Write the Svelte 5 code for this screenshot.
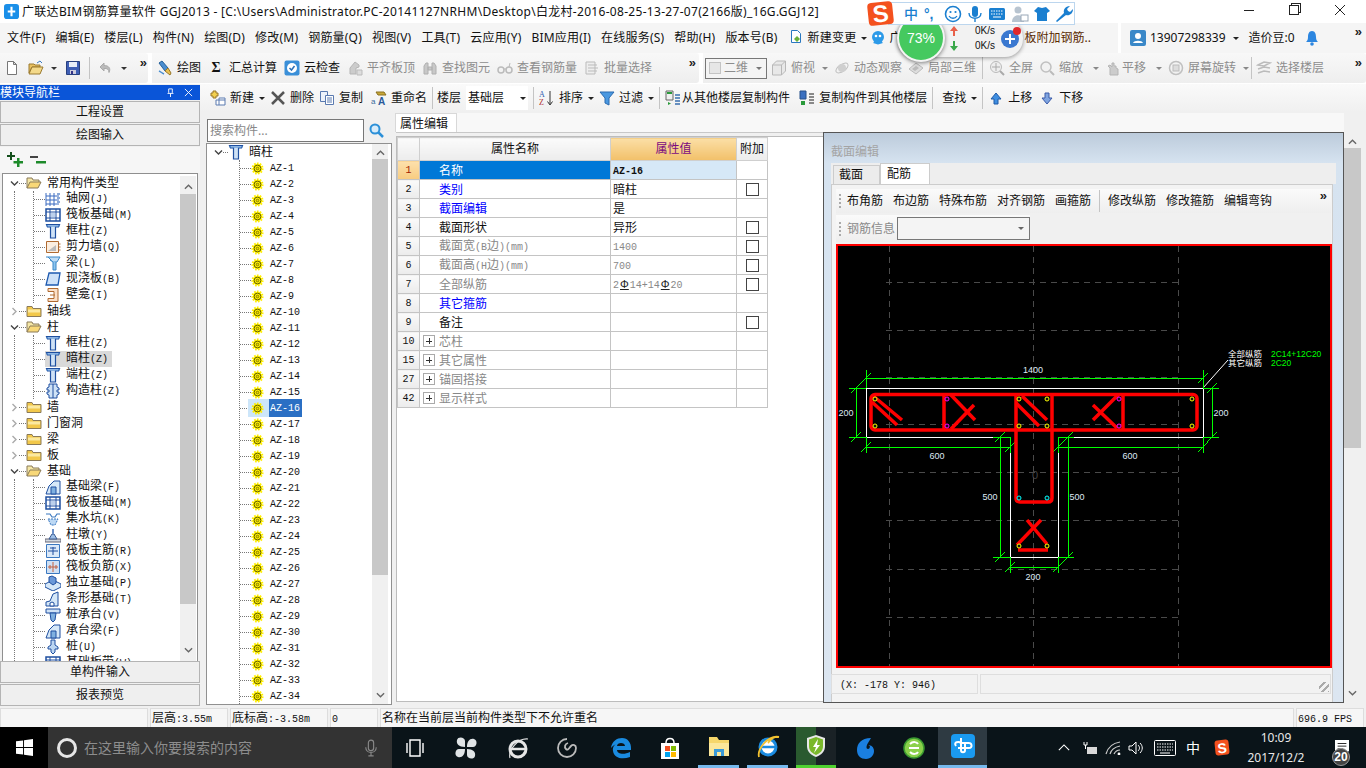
<script>
  const I = {
    doc: '<path d="M3.5 1.5h6l3 3v10h-9z" fill="#fff" stroke="#777"/><path d="M9.5 1.5v3h3z" fill="#ddd" stroke="#777"/>',
    open: '<path d="M1 13V4h5l1 1h5v2H4z" fill="#e8c060" stroke="#9a7a30"/><path d="M1 14l3-7h11l-3 7z" fill="#f3d98a" stroke="#9a7a30"/><path d="M9 3l3-2 2 2" fill="none" stroke="#3a7ac0"/>',
    save: '<path d="M1.5 1.5h13v13h-13z" fill="#3f5fb5" stroke="#28407f"/><path d="M4 2h8v5H4z" fill="#e8eef8"/><path d="M5 10h6v4H5z" fill="#ccd"/><path d="M6 11h2v3H6z" fill="#338"/>',
    undo: '<path d="M6 3L2 7l4 4V8.500c3-.5 5 1 5 4 2-4 0-7-5-7z" fill="#bbb" stroke="#aaa"/>',
    pen: '<path d="M2 3l3-2 6 7-3 3z" fill="#4a8ed0" stroke="#25609a"/><path d="M8 11l3-3 3 5-1 2z" fill="#e8c050" stroke="#98762a"/><path d="M2 11c2 1 3 2 5 3" fill="none" stroke="#4a8ed0" stroke-width="1.500"/>',
    cloud: '<rect x=".5" y=".5" width="15" height="15" rx="2" fill="#3a8fd8"/><circle cx="8" cy="8" r="5" fill="#fff"/><path d="M5.500 8l2 2 3-4" fill="none" stroke="#2a70b8" stroke-width="1.500"/>',
    flat: '<path d="M3 14V8l5-6 4 3v2l-3 1v6z" fill="#ccc" stroke="#b5b5b5"/><path d="M10 10h5v5h-5z" fill="#ddd" stroke="#bbb"/>',
    bino: '<path d="M2 14V6l2-3h2v11zM10 14V3h2l2 3v8zM6 7h4v3H6z" fill="#c8c8c8" stroke="#b0b0b0"/>',
    glass: '<circle cx="4" cy="10" r="3" fill="none" stroke="#bbb" stroke-width="1.500"/><circle cx="12" cy="10" r="3" fill="none" stroke="#bbb" stroke-width="1.500"/><path d="M7 9h2M12 7l1-4" stroke="#bbb"/>',
    batch: '<path d="M2 2h9v12H2z" fill="#eee" stroke="#bbb"/><path d="M4 5h9M4 8h10M4 11h9" stroke="#bbb"/>',
    cube: '<path d="M1.500 5l4-4h9v10l-4 4h-9zM1.500 5h9v10M10.500 5l4-4" fill="#e8e8e8" stroke="#b8b8b8"/>',
    orbit: '<ellipse cx="8" cy="8" rx="7" ry="3.500" fill="none" stroke="#c0c0c0" transform="rotate(-35 8 8)"/><circle cx="8" cy="8" r="4" fill="#cfcfcf"/>',
    local: '<path d="M1 9l7-6 7 5-7 6z" fill="#ddd" stroke="#bbb"/><path d="M4 9l4-3 3 2-4 3z" fill="#bbb"/>',
    zfull: '<circle cx="7" cy="7" r="5.500" fill="#eee" stroke="#bbb"/><path d="M7 3v8M3 7h8" stroke="#aaa"/><path d="M11 11l4 4" stroke="#aaa" stroke-width="2"/>',
    zoom: '<circle cx="7" cy="7" r="5" fill="#f2f2f2" stroke="#c0c0c0" stroke-width="1.500"/><path d="M11 11l4 4" stroke="#bbb" stroke-width="2"/>',
    pan: '<path d="M5 15V8L3 6l2-1 2 2V3h2v3h2v2l2 1v6z" fill="#ccc" stroke="#b5b5b5"/>',
    rotate: '<circle cx="8" cy="8" r="6.500" fill="none" stroke="#c0c0c0" stroke-width="1.500"/><rect x="5" y="5" width="6" height="6" fill="#ddd" stroke="#bbb"/>',
    floors: '<path d="M2 5l6-3 6 1-6 3zM2 9l6-2 6 1M2 13l6-2 6 1" fill="none" stroke="#bbb" stroke-width="1.500"/>',
    add: '<path d="M9 8h6v7H6v-5" fill="#fff" stroke="#5a7ab0"/><path d="M6 10h9M9 8v7" stroke="#5a7ab0"/><path d="M3 1h3v2h2v3H6v2H3V6H1V3h2z" fill="#f2d050" stroke="#98762a"/>',
    del: '<path d="M2 2l12 12M14 2L2 14" stroke="#555" stroke-width="2.500"/>',
    copy: '<path d="M1.500 1.500h7v10h-7z" fill="#eef3fb" stroke="#5a7ab0"/><path d="M6.500 5.500h8v9h-8z" fill="#fff" stroke="#5a7ab0"/><path d="M8 8h5M8 10h5M8 12h5" stroke="#5a7ab0"/>',
    rename: '<path d="M5 2h8l2 3H7z" fill="#c8a838" stroke="#8a7020"/><text x="0" y="14" font-size="8" fill="#3a6a9a" font-family="Liberation Sans">a</text><text x="7" y="15" font-size="10" font-weight="700" fill="#2a5a9a" font-family="Liberation Sans">A</text>',
    sort: '<text x="0" y="7" font-size="8" fill="#3060b0" font-family="Liberation Serif">A</text><text x="0" y="15" font-size="8" fill="#b03030" font-family="Liberation Serif">Z</text><path d="M11 1v13M8.500 11.500L11 15l2.500-3.500" fill="none" stroke="#333"/>',
    filter: '<path d="M1 2h14L10 8v7l-4-2V8z" fill="#4a98e0" stroke="#2a6ab0"/>',
    cfrom: '<path d="M1 1h7v9H1z" fill="#f0f0f0" stroke="#666"/><path d="M3 12v3l3-1.500z" fill="#2a9a3a"/><path d="M10 5h5M10 8h5M10 11h5M10 14h5" stroke="#3a70b0" stroke-width="1.500"/><path d="M2 3h5" stroke="#2a9a3a" stroke-width="2"/>',
    cto: '<path d="M1 1h6v8H1z" fill="#3a70c0" stroke="#26508a"/><path d="M2 11h4v4H2z" fill="#2a9a3a"/><path d="M10 4h5M10 7h5M10 10h5M10 13h5" stroke="#666" stroke-width="1.500"/>',
    up: '<path d="M8 3l5 6h-3v5H6V9H3z" fill="#3f8ee0" stroke="#1e5aa8"/>',
    down: '<path d="M8 14l5-6h-3V3H6v5H3z" fill="#7fa4e0" stroke="#3a5aa8"/>',
    search: '<circle cx="7" cy="7" r="4.500" fill="#d8ecfa" stroke="#2c90d8" stroke-width="2"/><path d="M10.500 10.500L15 15" stroke="#2c90d8" stroke-width="2.500"/>',
    page: '<path d="M3.500 .5h6l3 3v9h-9z" fill="#fff" stroke="#2a78c0"/><path d="M6 9l3-3 3 3-3 3z" fill="#6ab03a"/>',
    qq: '<ellipse cx="8" cy="7" rx="6" ry="6" fill="#2c9ae8"/><circle cx="6" cy="6" r="1.300" fill="#fff"/><circle cx="10" cy="6" r="1.300" fill="#fff"/><path d="M3 13l2-2h6l2 2-5 1.500z" fill="#2c9ae8"/>',
    user: '<rect width="16" height="16" rx="2" fill="#3a88c8"/><circle cx="8" cy="6" r="3" fill="#fff"/><path d="M3 13c1-3 9-3 10 0z" fill="#fff"/>',
    bell: '<path d="M8 1c-3 0-4 3-4 6 0 3-1 4-2 5h12c-1-1-2-2-2-5 0-3-1-6-4-6z" fill="#2c86e0"/><circle cx="8" cy="14" r="1.800" fill="#2c86e0"/>',
    plus: '<path d="M3 0h2v3h3v2H5v3H3V5H0V3h3z" fill="#144f1c"/><path d="M10 6h2.500v3H16v2.500h-3.500V15H10v-3.500H6.500V9H10z" fill="#1d8a2a"/>',
    minus: '<path d="M0 4h8v2H0z" fill="#444"/><path d="M6 9h10v2.500H6z" fill="#1d8a2a"/>',
    fopen: '<path d="M1 13V3h5l1 2h6v2" fill="#f5e7a6" stroke="#8a7a58"/><path d="M1 13l3-6h11l-3 6z" fill="#f8d878" stroke="#8a7a58"/>',
    fclosed: '<path d="M1 3.500h5l1 2h8v8H1z" fill="#f2c84a" stroke="#8a7a58"/><path d="M2 6.500h12v3H2z" fill="#fbe9a0"/>',
    grid: '<path d="M1 2v13M5 2v13M9 2v13M1 5h13M1 9h13M1 13h13" stroke="#3a6ac0"/><path d="M12 2h3v2h-3zM12 6h3v2h-3zM12 10h3v2h-3z" fill="#8aa8d8"/>',
    raft: '<path d="M1 2h14v12H1z" fill="none" stroke="#1e4fa0" stroke-width="1.500"/><path d="M5 2v12M11 2v12M1 5h14M1 11h14" stroke="#1e4fa0"/><path d="M6 6h4v4H6z" fill="#bcd0ec"/>',
    col: '<path d="M1.500 1.500h13l-1 2.500h-3v11h-5V4h-3z" fill="#cfe2f6" stroke="#1e4fa0" stroke-width="1.200"/><path d="M1.500 3h13" stroke="#4a88d0"/>',
    wall: '<path d="M1.500 2.500h12v11h-12z" fill="#fbeee0" stroke="#b06a30"/><path d="M3 12l8-6v6z" fill="#bbb"/><path d="M13.500 5h2M13.500 8h2M13.500 11h2" stroke="#b06a30"/>',
    beam: '<path d="M1 2h14l-3 5H8L3 2" fill="#bfdcf5" stroke="#3a88c8"/><path d="M5 5l3 2v8h3V7" fill="#8cc4ee" stroke="#3a88c8"/>',
    slab: '<path d="M4 2h11l-2 12H1z" fill="#cfe2f8" stroke="#1e5ab0" stroke-width="1.300"/>',
    niche: '<path d="M3 1.500h10v13H3v-3h6v-7H3z" fill="#fbe0c8" stroke="#b06a30"/><path d="M5 8h5" stroke="#b06a30"/>',
    ccol: '<path d="M4 1h8v3l2 1v2h-2v2h2v2l-2 1v3H4v-3l-2-1V9h2V7H2V5l2-1z" fill="#cfe2f6" stroke="#1e4fa0"/><path d="M8 1v14" stroke="#1e4fa0"/>',
    fbeam: '<path d="M1 15l3-8 5-5h6v13H1z" fill="#d6e8f8" stroke="#1e4fa0"/><path d="M6 15V8h5v7z" fill="#7fb0e0" stroke="#1e4fa0"/>',
    sump: '<path d="M1 3h4l2 3h3l2-3h3" fill="none" stroke="#3a78c0" stroke-width="1.200"/><path d="M3 8h10l-3 6H6z" fill="#bcd8f4" stroke="#3a78c0" stroke-dasharray="2 1"/>',
    pier: '<path d="M0 12h16v3H0z" fill="#d0d8e0" stroke="#667"/><path d="M4 12l3-5h2l3 5z" fill="#9ec0e8" stroke="#3a5a90"/><path d="M7 2h2v5H7z" fill="#6a90c8"/>',
    mainbar: '<path d="M1.500 1.500h13v13h-13z" fill="#dbe9f8" stroke="#3a78c0"/><path d="M3 8h10M8 4v8M5 5h6" stroke="#1e4fa0" fill="none"/>',
    negbar: '<path d="M1.500 1.500h13v13h-13z" fill="#cfe0f4" stroke="#3a78c0"/><path d="M3 8h10M8 3v10M5 6v4M11 6v4" stroke="#c06040"/>',
    iso: '<path d="M0 9l8-4 8 4v3l-8 4-8-4z" fill="#d6e8f8" stroke="#1e4fa0"/><path d="M4 7V2l3-1 4 2v5l-3 2z" fill="#6a98d8" stroke="#1e4fa0"/>',
    strip: '<path d="M1 15v-4l4-1 3-7 5-2v14z" fill="#d6e8f8" stroke="#1e4fa0"/><path d="M5 15v-3l2-1 2 1v3z" fill="#fff" stroke="#1e4fa0"/>',
    cap: '<path d="M1 2h14v4H1z" fill="#cfe2f6" stroke="#1e4fa0"/><path d="M5 6h6l-1 7-2 2-2-2z" fill="#7fb0e0" stroke="#1e4fa0"/>',
    pile: '<path d="M6 1h4v5l3 2v2h-3v3l-2 2-2-2v-3H3V8l3-2z" fill="#bcd6f2" stroke="#1e4fa0"/>',
    gear: '<circle cx="8" cy="8" r="5" fill="#ffee00" stroke="#ffee00" stroke-width="3" stroke-dasharray="1.600 1.200"/><circle cx="8" cy="8" r="3.600" fill="#ffee00" stroke="#5a5a00"/><circle cx="8" cy="8" r="1.400" fill="#eed800" stroke="#5a5a00" stroke-width=".7"/>'
  };

  const tb1a = [['pen', '绘图'], ['sigma', '汇总计算'], ['cloud', '云检查']];
  const tb1b = [['flat', '平齐板顶'], ['bino', '查找图元'], ['glass', '查看钢筋量'], ['batch', '批量选择']];
  const tb2c = [['up', '上移'], ['down', '下移']];

  const groups = [
    { name: '常用构件类型', open: true, kids: [['grid', '轴网(J)'], ['raft', '筏板基础(M)'], ['col', '框柱(Z)'], ['wall', '剪力墙(Q)'], ['beam', '梁(L)'], ['slab', '现浇板(B)'], ['niche', '壁龛(I)']] },
    { name: '轴线' },
    { name: '柱', open: true, kids: [['col', '框柱(Z)'], ['col', '暗柱(Z)', true], ['col', '端柱(Z)'], ['ccol', '构造柱(Z)']] },
    { name: '墙' },
    { name: '门窗洞' },
    { name: '梁' },
    { name: '板' },
    { name: '基础', open: true, kids: [['fbeam', '基础梁(F)'], ['raft', '筏板基础(M)'], ['sump', '集水坑(K)'], ['pier', '柱墩(Y)'], ['mainbar', '筏板主筋(R)'], ['negbar', '筏板负筋(X)'], ['iso', '独立基础(P)'], ['strip', '条形基础(T)'], ['cap', '桩承台(V)'], ['fbeam', '承台梁(F)'], ['pile', '桩(U)'], ['raft', '基础板带(W)']] }
  ];

  const azList = Array.from({ length: 35 }, (_, i) => `AZ-${i + 1}`);

  const rows = [
    { no: 1, name: '名称', cls: 'picked', val: 'AZ-16', vcls: 'vpicked' },
    { no: 2, name: '类别', cls: 'blue', val: '暗柱', check: true },
    { no: 3, name: '截面编辑', cls: 'blue', val: '是' },
    { no: 4, name: '截面形状', val: '异形', check: true },
    { no: 5, name: '截面宽(B边)(mm)', cls: 'gray', val: '1400', vcls: 'gray', check: true },
    { no: 6, name: '截面高(H边)(mm)', cls: 'gray', val: '700', vcls: 'gray', check: true },
    { no: 7, name: '全部纵筋', cls: 'gray', vcls: 'gray', bars: true, check: true },
    { no: 8, name: '其它箍筋', cls: 'blue' },
    { no: 9, name: '备注', check: true },
    { no: 10, name: '芯柱', cls: 'gray', exp: true },
    { no: 15, name: '其它属性', cls: 'gray', exp: true },
    { no: 27, name: '锚固搭接', cls: 'gray', exp: true },
    { no: 42, name: '显示样式', cls: 'gray', exp: true }
  ];

  const runs = (s) => s.split(/([\x00-\x7f]+)/).filter(Boolean);
  const isLat = (s) => /^[\x00-\x7f]/.test(s);

  // drawing
  const gridV = [889, 1033, 1178];
  const gridH = [282, 330, 377, 424, 472, 520, 569, 617];
  const ties = [
    [872, 395, 902, 420], [872, 402, 897, 425],
    [951, 395, 975, 420], [951, 429, 974, 405],
    [1022, 396, 1047, 420], [1016, 403, 1039, 426],
    [1118, 395, 1093, 420], [1117, 428, 1093, 405],
    [1017, 545, 1041, 520], [1047, 544, 1027, 520]
  ];
  const dots = [
    [875, 399, '#ff0'], [875, 426, '#ff0'], [947, 399, '#f0f'], [947, 426, '#f0f'],
    [1019, 399, '#ff0'], [1019, 426, '#ff0'], [1047, 399, '#ff0'], [1047, 426, '#ff0'],
    [1119, 399, '#f0f'], [1119, 426, '#f0f'], [1192, 399, '#ff0'], [1192, 426, '#ff0'],
    [1019, 498, '#0ff'], [1047, 498, '#0ff'], [1019, 546, '#ff0'], [1047, 546, '#ff0']
  ];
  const dims = [
    'M866 378H1203M866 370V388M1203 370V388',
    'M856 388V437M849 388H866M849 437H866',
    'M1212 388V437M1203 388H1219M1203 437H1219',
    'M866 447H1010M866 437V453M1010 437V453',
    'M1058 447H1203M1058 437V453M1203 437V453',
    'M1000 437V557M993 437H1010M993 557H1010',
    'M1068 437V557M1058 437H1074M1058 557H1074',
    'M1010 567H1058M1010 557V573M1058 557V573'
  ];
  const ticks = [[866, 378], [1203, 378], [856, 388], [856, 437], [1212, 388], [1212, 437], [866, 447], [1010, 447], [1058, 447], [1203, 447], [1000, 437], [1000, 557], [1068, 437], [1068, 557], [1010, 567], [1058, 567]];
  const dimText = [['1400', 1033, 373], ['200', 846, 416], ['200', 1221, 416], ['600', 937, 459], ['600', 1130, 459], ['500', 990, 500], ['500', 1077, 500], ['200', 1033, 580]];
</script>

{#snippet ic(name)}
  <svg class="ic" viewBox="0 0 16 16">{@html I[name]}</svg>
{/snippet}

{#snippet mixed(text)}
  {#each runs(text) as r}{#if isLat(r)}<span class="lat">{r}</span>{:else}{r}{/if}{/each}
{/snippet}

{#snippet caret()}
  <i class="caret"></i>
{/snippet}

<div class="screen">
  <header class="titlebar">
    <svg class="appicon" viewBox="0 0 16 16"><rect width="16" height="16" rx="3" fill="#1a8fe8" /><path d="M8 3v10M4 8h8" stroke="#fff" stroke-width="2.200" fill="none" /></svg>
    <span class="titletext">广联达BIM钢筋算量软件 GGJ2013 - [C:\Users\Administrator.PC-20141127NRHM\Desktop\白龙村-2016-08-25-13-27-07(2166版)_16G.GGJ12]</span>
    <div class="winbtns">
      <i class="w-min"></i>
      <i class="w-max"></i>
      <svg class="w-close" viewBox="0 0 10 10"><path d="M0 0l10 10M10 0L0 10" stroke="#222" fill="none" /></svg>
    </div>
  </header>

  <nav class="menubar">
    <div class="menuseg mainmenu">
      <span>文件(F)</span><span>编辑(E)</span><span>楼层(L)</span><span>构件(N)</span><span>绘图(D)</span><span>修改(M)</span><span>钢筋量(Q)</span><span>视图(V)</span><span>工具(T)</span><span>云应用(Y)</span><span>BIM应用(I)</span><span>在线服务(S)</span><span>帮助(H)</span><span>版本号(B)</span>
      <span class="tool">{@render ic('page')}新建变更{@render caret()}</span>
      <span class="tool qq">{@render ic('qq')}广</span>
      <span class="news">板附加钢筋..</span>
    </div>
    <div class="menuseg usr">
      {@render ic('user')}<span class="phone">13907298339</span>{@render caret()}
      <span class="bean">造价豆:0</span>{@render ic('bell')}
      <b class="more">»</b>
    </div>
  </nav>

  <div class="toolbar tb1">
    <div class="seg seg1">
      {@render ic('doc')}
      <span class="tool">{@render ic('open')}{@render caret()}</span>
      {@render ic('save')}
      <i class="sep"></i>
      <span class="tool">{@render ic('undo')}{@render caret()}</span>
      <b class="more">»</b>
    </div>
    <div class="seg seg2">
      {#each tb1a as [icon, text]}
        <span class="tool">
          {#if icon === 'sigma'}<b class="sigma">Σ</b>{:else}{@render ic(icon)}{/if}
          {text}
        </span>
      {/each}
      {#each tb1b as [icon, text]}
        <span class="tool off">{@render ic(icon)}{text}</span>
      {/each}
      <b class="more end">»</b>
    </div>
    <div class="seg seg3">
      <span class="combo2d"><i class="sq"></i>二维<i class="caret"></i></span>
      <span class="tool off top">{@render ic('cube')}俯视{@render caret()}</span>
      <span class="tool off">{@render ic('orbit')}动态观察</span>
      <span class="tool off">{@render ic('local')}局部三维</span>
      <i class="sep"></i>
      <span class="tool off">{@render ic('zfull')}全屏</span>
      <span class="tool off wide">{@render ic('zoom')}缩放{@render caret()}</span>
      <span class="tool off wide pan">{@render ic('pan')}平移{@render caret()}</span>
      <span class="tool off rot">{@render ic('rotate')}屏幕旋转{@render caret()}</span>
      <i class="sep"></i>
      <span class="tool off floors">{@render ic('floors')}选择楼层</span>
      <b class="more end">»</b>
    </div>
  </div>

  <main class="work">
    <aside class="nav">
      <div class="navhead">
        <span>模块导航栏</span>
        <span class="pin">
          <svg viewBox="0 0 10 10"><path d="M3 1h4v4l1 1H2l1-1zM5 6v4" stroke="#fff" fill="none" /></svg>
          <svg viewBox="0 0 10 10"><path d="M1 1l8 8M9 1L1 9" stroke="#fff" fill="none" /></svg>
        </span>
      </div>
      <button class="navbtn">工程设置</button>
      <button class="navbtn">绘图输入</button>
      <div class="plusbar">{@render ic('plus')}{@render ic('minus')}</div>
      <div class="navtree">
        <div class="treescroll">
          {#each groups as g}
            <div class="grow">
              <svg class="arrow" viewBox="0 0 9 9">
                {#if g.open}<path d="M1 2.500l3.500 3.500L8 2.500" stroke="#444" stroke-width="1.400" fill="none" />
                {:else}<path d="M2.500 1L6 4.500 2.500 8" stroke="#aaa" stroke-width="1.400" fill="none" />{/if}
              </svg>
              <i class="dash d7"></i>
              {@render ic(g.open ? 'fopen' : 'fclosed')}
              <span class="glabel">{g.name}</span>
            </div>
            {#if g.kids}
              <div class="kids">
                <div class="kidlist">
                  {#each g.kids as [icon, label, sel]}
                    <div class="kid">
                      <i class="dash d11"></i>
                      <span class="kidbox" class:sel>{@render ic(icon)}<span class="klabel">{@render mixed(label)}</span></span>
                    </div>
                  {/each}
                </div>
              </div>
            {/if}
          {/each}
        </div>
        <div class="vscroll sb1">
          <svg viewBox="0 0 10 6"><path d="M1 5l4-4 4 4" stroke="#666" stroke-width="1.500" fill="none" /></svg>
          <i class="thumb"></i>
          <svg viewBox="0 0 10 6"><path d="M1 1l4 4 4-4" stroke="#666" stroke-width="1.500" fill="none" /></svg>
        </div>
      </div>
      <button class="navbtn">单构件输入</button>
      <button class="navbtn">报表预览</button>
    </aside>

    <section class="right">
      <div class="toolbar tb2">
        <span class="tool">{@render ic('add')}新建{@render caret()}</span>
        <span class="tool">{@render ic('del')}删除</span>
        <span class="tool">{@render ic('copy')}复制</span>
        <span class="tool ren">{@render ic('rename')}重命名</span>
        <i class="sep"></i>
        <span class="floorlbl">楼层</span>
        <span class="combo">基础层<i class="caret"></i></span>
        <i class="sep"></i>
        <span class="tool">{@render ic('sort')}排序{@render caret()}</span>
        <span class="tool">{@render ic('filter')}过滤{@render caret()}</span>
        <i class="sep"></i>
        <span class="tool cf">{@render ic('cfrom')}从其他楼层复制构件</span>
        <span class="tool ct">{@render ic('cto')}复制构件到其他楼层</span>
        <i class="sep"></i>
        <span class="tool fnd">查找{@render caret()}</span>
        <i class="sep"></i>
        {#each tb2c as [icon, text]}
          <span class="tool updown">{@render ic(icon)}{text}</span>
        {/each}
      </div>

      <div class="panes">
        <div class="mid">
          <div class="searchrow">
            <span class="searchbox">搜索构件...</span>
            {@render ic('search')}
          </div>
          <div class="midtree">
            <div class="midlist">
              <div class="mroot">
                <svg class="arrow" viewBox="0 0 9 9"><path d="M1 2.500l3.500 3.500L8 2.500" stroke="#444" stroke-width="1.400" fill="none" /></svg>
                <i class="dash d5"></i>
                {@render ic('col')}
                <span class="glabel">暗柱</span>
              </div>
              <div class="azlist">
                {#each azList as az}
                  <div class="az">
                    <i class="dash d11"></i>
                    {@render ic('gear')}
                    <span class="azname" class:on={az === 'AZ-16'}><span class="lat">{az}</span></span>
                  </div>
                {/each}
              </div>
            </div>
            <div class="vscroll sb2">
              <svg viewBox="0 0 10 6"><path d="M1 5l4-4 4 4" stroke="#666" stroke-width="1.500" fill="none" /></svg>
              <i class="thumb"></i>
              <svg viewBox="0 0 10 6"><path d="M1 1l4 4 4-4" stroke="#666" stroke-width="1.500" fill="none" /></svg>
            </div>
          </div>
        </div>

        <div class="props">
          <div class="tabline"><span class="proptab">属性编辑</span></div>
          <div class="propbody">
            <table class="grid">
              <colgroup><col class="c0" /><col class="c1" /><col class="c2" /><col class="c3" /></colgroup>
              <thead>
                <tr>
                  <th></th>
                  <th>属性名称</th>
                  <th class="hval">属性值</th>
                  <th>附加</th>
                </tr>
              </thead>
              <tbody>
                {#each rows as r}
                  <tr>
                    <td class="no" class:nosel={r.no === 1}><span class="lat">{r.no}</span></td>
                    <td class="name {r.cls ?? ''}">
                      {#if r.exp}<i class="expbox"></i>{/if}{@render mixed(r.name)}
                    </td>
                    <td class="val {r.vcls ?? ''}">
                      {#if r.bars}
                        <span class="lat">2</span><span class="rb">Φ</span><span class="lat">14+14</span><span class="rb">Φ</span><span class="lat">20</span>
                      {:else if r.val}
                        {@render mixed(r.val)}
                      {/if}
                    </td>
                    <td class="chk">{#if r.check}<i class="box"></i>{/if}</td>
                  </tr>
                {/each}
              </tbody>
            </table>
          </div>
        </div>

        <div class="vscroll sb3">
          <svg viewBox="0 0 10 6"><path d="M1 5l4-4 4 4" stroke="#666" stroke-width="1.500" fill="none" /></svg>
          <i class="thumb"></i>
          <svg viewBox="0 0 10 6"><path d="M1 1l4 4 4-4" stroke="#666" stroke-width="1.500" fill="none" /></svg>
        </div>
      </div>
    </section>
  </main>

  <footer class="status">
    <span class="cell s0"></span>
    <span class="cell s1">{@render mixed('层高:3.55m')}</span>
    <span class="cell s2">{@render mixed('底标高:-3.58m')}</span>
    <span class="cell s3">{@render mixed('0')}</span>
    <span class="cell s4">名称在当前层当前构件类型下不允许重名</span>
    <span class="cell s5"><span class="lat">696.9 FPS</span></span>
  </footer>

  <div class="taskbar">
    <div class="start">
      <svg viewBox="0 0 18 18"><path d="M0 2.500l7.500-1v7H0zM8.500 1.300L18 0v8.500H8.500zM0 9.500h7.500v7l-7.500-1zM8.500 9.500H18V18l-9.500-1.300z" fill="#fff" /></svg>
    </div>
    <div class="tsearch">
      <i class="ring"></i>
      <span>在这里输入你要搜索的内容</span>
      <svg class="tmic" viewBox="0 0 16 20"><rect x="5" y="1" width="6" height="12" rx="3" fill="none" stroke="#888" stroke-width="1.300" /><path d="M2 9c0 8 12 8 12 0M8 15v4M5 19h6" stroke="#888" stroke-width="1.300" fill="none" /></svg>
    </div>
    <div class="ticons">
      <span class="tk"><svg viewBox="0 0 24 24"><path d="M7 4h10v16H7zM4 7v10M20 7v10" stroke="#fff" stroke-width="1.400" fill="none" /></svg></span>
      <span class="tk m2"><svg viewBox="0 0 24 24"><path d="M11 11C5 11 2 8 3 4s8-3 8 1zM13 11c0-6 3-9 7-8s3 8-1 8zM13 13c6 0 9 3 8 7s-8 3-8-1zM11 13c0 6-3 9-7 8s-3-8 1-8z" fill="#e0e4e6" /></svg></span>
      <span class="tk m3"><svg viewBox="0 0 24 24"><circle cx="12" cy="13" r="8" fill="none" stroke="#e6e6e6" stroke-width="3" /><path d="M4 13h16" stroke="#e6e6e6" stroke-width="2.500" /><path d="M4 22C2 14 12 2 22 3" stroke="#e6e6e6" stroke-width="1.200" fill="none" /></svg></span>
      <span class="tk"><svg viewBox="0 0 24 24"><path d="M12 3a9 9 0 1 0 9 9c0-3-3-4-5-2s-3 5-5 3-1-5 2-6" fill="none" stroke="#bbb" stroke-width="1.800" /></svg></span>
      <span class="tk m5"><svg viewBox="0 0 24 24"><path d="M2 12C3 5 8 2 13 2c6 0 9 5 9 10v2H8c0 4 7 5 13 2v5c-8 3-16 1-17-6-1-5 4-9 8-8-4 0-8 2-10 5zM8 10h8c0-4-8-4-8 0z" fill="#1a8be0" /></svg></span>
      <span class="tk"><svg viewBox="0 0 24 24"><path d="M3 7h18v16H3z" fill="#fff" /><path d="M8 7c0-6 8-6 8 0" fill="none" stroke="#fff" stroke-width="1.500" /><path d="M7 10h5v5H7z" fill="#f25022" /><path d="M13 10h5v5h-5z" fill="#7fba00" /><path d="M7 16h5v5H7z" fill="#00a4ef" /><path d="M13 16h5v5h-5z" fill="#ffb900" /></svg></span>
      <span class="tk ul"><svg viewBox="0 0 24 24"><path d="M2 3h8l2 3h10v16H2z" fill="#f5d66a" /><path d="M2 9h20v13H2z" fill="#fbe79a" /><path d="M7 15h10v7h-3v-4h-4v4H7z" fill="#3a9ad8" /></svg></span>
      <span class="tk ul"><svg viewBox="0 0 24 24"><circle cx="12" cy="13" r="8" fill="#fff" stroke="#1a8be0" stroke-width="3" /><path d="M5 13h14" stroke="#1a8be0" stroke-width="2.500" /><path d="M3 23C1 15 12 1 23 3c-7-1-9 4-11 6" stroke="#f2c230" stroke-width="1.800" fill="none" /></svg></span>
      <span class="tk shield">
        <svg viewBox="0 0 24 24"><path d="M12 1l9 3v8c0 6-4 9-9 11-5-2-9-5-9-11V4z" fill="#e8e8e8" /><path d="M12 3l7 2.500V12c0 5-3 7-7 9-4-2-7-4-7-9V5.500z" fill="#7ab82a" /><path d="M14 5l-5 8h3l-2 6 6-8h-3z" fill="#fff" /></svg>
      </span>
      <span class="tk"><svg viewBox="0 0 24 24"><path d="M18 2C8 2 4 8 4 14s4 9 9 9 8-4 8-8-3-6-6-6c3 0 2 4 0 4s-2-3 0-6c1-2 2-3 3-5z" fill="#1a7fe0" /></svg></span>
      <span class="tk"><svg viewBox="0 0 24 24"><circle cx="12" cy="12" r="10" fill="#8ad04a" stroke="#3a9a30" stroke-width="1.500" /><path d="M7 12h10M8 8c3-3 7-2 8 0M8 16c3 3 7 2 8 0" stroke="#fff" stroke-width="2" fill="none" /></svg></span>
      <span class="tk act"><svg viewBox="0 0 24 24"><rect width="24" height="24" rx="4" fill="#1a9af0" /><path d="M10 4v12c0 3 4 3 4 0V8M5 12c-3-4 3-5 5-3h7c4-1 5 5 1 5H7" stroke="#fff" stroke-width="2" fill="none" /></svg></span>
    </div>
    <div class="tray">
      <svg class="t1" viewBox="0 0 14 8"><path d="M1 7l6-6 6 6" stroke="#fff" stroke-width="1.300" fill="none" /></svg>
      <svg class="t2" viewBox="0 0 16 14"><path d="M2 1v3h3V1M3.500 4v4" stroke="#fff" fill="none" /><rect x="5" y="6" width="10" height="7" fill="#d8d8d8" /></svg>
      <svg class="t2" viewBox="0 0 16 14"><path d="M1 13C3 6 8 2 15 1M5 13c1-4 5-7 10-8M9 13c1-2 3-4 6-4" stroke="#ccc" stroke-width="1.200" fill="none" /><circle cx="14" cy="13" r="1.400" fill="#fff" /></svg>
      <svg class="t2" viewBox="0 0 16 14"><path d="M1 5h3l4-4v12l-4-4H1z" fill="none" stroke="#fff" /><path d="M10 4c2 2 2 4 0 6M12 2c3 3 3 7 0 10" stroke="#fff" fill="none" /></svg>
      <svg class="t3" viewBox="0 0 22 16"><rect x=".5" y=".5" width="21" height="15" rx="1" fill="none" stroke="#fff" /><path d="M3 4h16M3 7h16M3 10h16" stroke="#fff" stroke-dasharray="1.500 1" /><path d="M6 13h10" stroke="#fff" /></svg>
      <span class="zh">中</span>
      <span class="sg small">S</span>
      <div class="clock"><span>10:09</span><span>2017/12/2</span></div>
      <span class="noti">
        <svg viewBox="0 0 16 16"><path d="M0 0h16v13H0z" fill="#fff" /><path d="M3 4h10M3 7h10M3 10h6" stroke="#111" /></svg>
        <b>20</b>
      </span>
    </div>
  </div>

  <!-- floating window and desktop widgets sit over the app -->
  <div class="dialog">
    <div class="dlgtitle">截面编辑</div>
    <div class="dlgtabs"><span class="dtab">截面</span><span class="dtab act">配筋</span></div>
    <div class="dlgbody">
      <div class="dtb">
        <i class="grip"></i>
        <span>布角筋</span><span>布边筋</span><span>特殊布筋</span><span>对齐钢筋</span><span>画箍筋</span>
        <i class="sep"></i>
        <span>修改纵筋</span><span>修改箍筋</span><span>编辑弯钩</span>
        <b class="more end">»</b>
      </div>
      <div class="dtb2">
        <div class="dtb2in">
          <i class="grip"></i><span class="gray2">钢筋信息</span><span class="select"><i class="caret"></i></span>
        </div>
      </div>
      <div class="canvas">
        <svg viewBox="838 246 492 420">
          <g stroke="#4a4a4a" stroke-dasharray="6 5" fill="none" shape-rendering="crispEdges">
            {#each gridV as x}<path d="M{x} 246V666" />{/each}
            {#each gridH as y}<path d="M886 {y}H1182" />{/each}
          </g>
          <path d="M866 388H1203V437H1058V557H1010V437H866Z" fill="none" stroke="#fff" shape-rendering="crispEdges" />
          <path d="M1203 388L1228 360" stroke="#fff" fill="none" />
          <g stroke="#0f0" fill="none" shape-rendering="crispEdges">
            {#each dims as d}<path {d} />{/each}
            {#each ticks as [x, y]}<path d="M{x - 5} {y + 5}L{x + 5} {y - 5}" />{/each}
          </g>
          <g fill="none" stroke="#f00" stroke-width="3.500">
            <rect x="871" y="394.500" width="326" height="35.500" rx="4" />
            <path d="M1016 430V498Q1016 502 1020 502H1048Q1052 502 1052 498V430" />
            <path d="M944 394V430M1123 394V430M1016 394V430M1052 394V430" />
            <path d="M1018 550H1048" />
            {#each ties as [a, b, c, d]}<path d="M{a} {b}L{c} {d}" />{/each}
          </g>
          {#each dots as [x, y, c]}<circle cx={x} cy={y} r="2" fill="#111" stroke={c} />{/each}
          <g class="dimtxt">
            {#each dimText as [t, x, y]}<text {x} {y}>{t}</text>{/each}
          </g>
          <text class="origin" x="1035" y="479">0</text>
          <text class="note" x="1228" y="357" fill="#fff">全部纵筋</text>
          <text class="note" x="1271" y="357" fill="#0f0">2C14+12C20</text>
          <text class="note" x="1228" y="366" fill="#fff">其它纵筋</text>
          <text class="note" x="1271" y="366" fill="#0f0">2C20</text>
        </svg>
      </div>
      <div class="dstat">
        <span class="dcell dc1"><span class="lat">(X: -178 Y: 946)</span></span>
        <span class="dcell dc2"><i class="rgrip"></i></span>
      </div>
    </div>
  </div>

  <div class="ball">
    <div class="balltext">73%</div>
    <div class="speed">
      <div class="sp"><svg viewBox="0 0 8 10"><path d="M4 0l4 5H5v5H3V5H0z" fill="#e8604a" /></svg><span>0K/s</span></div>
      <div class="sp"><svg viewBox="0 0 8 10"><path d="M4 10l4-5H5V0H3v5H0z" fill="#3aa84a" /></svg><span>0K/s</span></div>
    </div>
    <div class="bplus"><i></i></div>
  </div>

  <div class="ime">
    <span class="sg">S</span>
    <div class="imebar">
      <span class="zhb">中</span>
      <span class="punc">°,</span>
      <svg viewBox="0 0 18 18"><circle cx="9" cy="9" r="7.500" fill="none" stroke="#1a7fd0" stroke-width="1.600" /><circle cx="6.500" cy="7" r="1.100" fill="#1a7fd0" /><circle cx="11.500" cy="7" r="1.100" fill="#1a7fd0" /><path d="M5 11c2 3 6 3 8 0" stroke="#1a7fd0" stroke-width="1.300" fill="none" /></svg>
      <svg viewBox="0 0 18 18"><rect x="6" y="1" width="6" height="11" rx="3" fill="#1a7fd0" /><path d="M3 8c0 7 12 7 12 0M9 14v3" stroke="#1a7fd0" stroke-width="1.400" fill="none" /></svg>
      <svg viewBox="0 0 18 18"><rect x="1" y="3" width="16" height="12" rx="1.500" fill="#1a7fd0" /><path d="M3 6h12M3 9h12" stroke="#fff" stroke-dasharray="1.500 1" /><path d="M5 12h8" stroke="#fff" /></svg>
      <svg viewBox="0 0 18 18"><circle cx="7" cy="5" r="3.500" fill="#b8c4d0" /><path d="M1 17c0-9 12-9 12 0z" fill="#b8c4d0" /><rect x="10" y="10" width="7" height="6" fill="#fff" stroke="#99a8b8" /></svg>
      <svg viewBox="0 0 18 18"><path d="M5 2l4 1 4-1 4 4-3 2v8H4V8L1 6z" fill="#1a7fd0" /></svg>
      <svg viewBox="0 0 18 18"><path d="M2 17l-1-1 8-8c-1-3 1-7 6-7l-3 3 1 2 2 1 3-3c0 5-4 7-7 6z" fill="#1a7fd0" /></svg>
    </div>
  </div>
</div>

<style>
  :global(body) {
    margin: 0;
    background: #f0f0f0;
  }

  .screen {
    position: relative;
    width: 1366px;
    height: 768px;
    overflow: hidden;
    display: flex;
    flex-direction: column;
    font: 12px/16px "Noto Sans", "Noto Sans CJK SC", sans-serif;
    color: #111;
    background: #fbfbfb;
  }

  .lat {
    font-family: "Liberation Mono", monospace;
    font-size: 10px;
  }

  .ic {
    width: 16px;
    height: 16px;
    flex: none;
  }

  .caret {
    display: inline-block;
    flex: none;
    width: 0;
    height: 0;
    border-left: 3px solid transparent;
    border-right: 3px solid transparent;
    border-top: 3px solid #222;
    margin-left: 4px;
  }

  .sep {
    display: block;
    flex: none;
    width: 1px;
    height: 22px;
    background: #c4c4c4;
  }

  .more {
    font: 700 13px/14px "Liberation Sans", sans-serif;
    color: #222;
  }

  .more.end {
    margin-left: auto;
  }

  .tool {
    display: inline-flex;
    align-items: center;
    gap: 4px;
    white-space: nowrap;
  }

  .tool .caret {
    margin-left: 1px;
  }

  .off {
    color: #8d8d8d;
  }

  .off .caret {
    border-top-color: #888;
    margin-left: 3px;
  }

  .top {
    margin-left: -2px;
  }

  .wide .caret {
    margin-left: 6px;
  }

  .tool.pan {
    gap: 1px;
  }

  .pan .caret {
    margin-left: 9px;
  }

  .rot {
    margin-right: -4px;
  }

  .floors {
    margin-left: -2px;
  }

  /* title */
  .titlebar {
    height: 23px;
    flex: none;
    display: flex;
    align-items: center;
    background: #fff;
    padding-left: 4px;
  }

  .appicon {
    width: 15px;
    height: 15px;
    margin-right: 3px;
  }

  .titletext {
    white-space: nowrap;
    font-size: 12px;
    letter-spacing: 0.3px;
  }

  .winbtns {
    position: absolute;
    left: 1244px;
    top: 5px;
    display: flex;
    align-items: center;
    gap: 35px;
  }

  .w-min {
    width: 10px;
    height: 1px;
    background: #222;
  }

  .w-max {
    width: 8px;
    height: 8px;
    border: 1px solid #222;
    box-shadow: 2px -2px 0 -1px #fff, 2px -2px 0 0 #222;
    margin-right: 1px;
  }

  .w-close {
    width: 10px;
    height: 10px;
  }

  .menubar {
    height: 30px;
    flex: none;
    display: flex;
    gap: 3px;
    background: #fff;
  }

  .menuseg {
    display: flex;
    align-items: center;
    gap: 10px;
    padding-left: 7px;
    width: 1118px;
    flex: none;
    box-sizing: border-box;
    background: #f5f5f5;
    white-space: nowrap;
  }

  .mainmenu {
    letter-spacing: 0.2px;
  }

  .qq {
    margin-left: -7px;
    gap: 3px;
  }

  .news {
    margin-left: 113px;
    color: #5a2a00;
    letter-spacing: 0;
  }

  .usr {
    width: 245px;
    gap: 0;
    padding-left: 9px;
  }

  .usr .ic:first-child {
    margin-right: 4px;
  }

  .usr .caret {
    margin-left: 7px;
  }

  .bean {
    margin-left: 10px;
    margin-right: 9px;
  }

  .usr .more {
    margin-left: auto;
    margin-right: 4px;
    margin-top: -12px;
  }

  /* toolbars */
  .toolbar {
    display: flex;
    align-items: center;
    height: 30px;
    flex: none;
    white-space: nowrap;
  }

  .tb1 {
    height: 31px;
    gap: 4px;
    padding-bottom: 1px;
    box-sizing: border-box;
    background: #fff;
  }

  .seg {
    display: flex;
    align-items: center;
    height: 30px;
    gap: 7px;
    background: linear-gradient(#f8f8f8, #eeeeee);
    border-radius: 0 3px 3px 0;
  }

  .seg .more {
    margin-top: -10px;
  }

  .seg1 {
    width: 148px;
    flex: none;
    box-sizing: border-box;
    padding-left: 4px;
    gap: 8px;
  }

  .seg1 .caret {
    border-top-color: #333;
    margin-left: 3px;
  }

  .seg1 .more {
    margin-left: auto;
    margin-right: 1px;
  }

  .seg2 {
    width: 547px;
    flex: none;
    box-sizing: border-box;
    padding: 0 3px 0 5px;
  }

  .seg3 {
    flex: 1;
    min-width: 0;
    gap: 6px;
    box-sizing: border-box;
    padding: 0 4px 0 2px;
  }

  .sigma {
    font: 700 14px/16px "Liberation Serif", serif;
    width: 16px;
    text-align: center;
    margin-right: 1px;
  }

  .combo2d {
    display: flex;
    align-items: center;
    width: 62px;
    height: 21px;
    box-sizing: border-box;
    border: 1px solid #777;
    color: #8d8d8d;
    padding-left: 3px;
    gap: 3px;
    background: #f4f4f4;
  }

  .sq {
    width: 12px;
    height: 12px;
    background: #e6e6e6;
    border: 1px solid #c4c4c4;
    box-sizing: border-box;
  }

  .combo2d .caret {
    border-top-color: #777;
    margin-left: auto;
    margin-right: 4px;
  }

  /* workspace */
  .work {
    flex: 1;
    min-height: 0;
    display: flex;
    background: #f0f0f0;
  }

  .nav {
    width: 200px;
    flex: none;
    display: flex;
    flex-direction: column;
    padding-top: 1px;
    box-sizing: border-box;
  }

  .navhead {
    height: 15px;
    background: #0a55d8;
    color: #fff;
    display: flex;
    align-items: center;
    justify-content: space-between;
    margin-bottom: 1px;
    line-height: 15px;
  }

  .pin {
    display: flex;
    gap: 9px;
    padding-right: 7px;
  }

  .pin svg {
    width: 9px;
    height: 9px;
  }

  .navbtn {
    display: block;
    height: 22px;
    margin: 0 0 1px;
    padding: 0;
    font: inherit;
    color: #111;
    background: #efefef;
    border: 1px solid #b4b4b4;
    box-sizing: border-box;
    flex: none;
  }

  .plusbar {
    height: 26px;
    flex: none;
    display: flex;
    align-items: center;
    gap: 7px;
    padding-left: 7px;
    background: #f6f6f6;
  }

  .navtree {
    flex: none;
    height: 488px;
    margin: 0 2px;
    display: flex;
    background: #fff;
    border: 1px solid #8f8f8f;
    border-bottom: none;
    box-sizing: border-box;
    overflow: hidden;
  }

  .treescroll {
    flex: 1;
    min-width: 0;
    overflow: hidden;
    padding-top: 1px;
  }

  .grow {
    display: flex;
    align-items: center;
    height: 16px;
    padding-left: 7px;
  }

  .arrow {
    width: 9px;
    height: 9px;
    flex: none;
  }

  .dash {
    display: block;
    flex: none;
    height: 0;
    border-top: 1px dotted #777;
  }

  .d5 {
    width: 5px;
  }

  .d7 {
    width: 7px;
  }

  .d11 {
    width: 11px;
  }

  .glabel {
    margin-left: 5px;
  }

  .kids {
    margin-left: 11px;
    border-left: 1px dotted #777;
    padding-left: 18px;
  }

  .kidlist {
    border-left: 1px dotted #777;
  }

  .kid {
    display: flex;
    align-items: center;
    height: 16px;
  }

  .kidbox {
    display: inline-flex;
    align-items: center;
    height: 16px;
    padding-right: 4px;
  }

  .kidbox.sel {
    background: #d9d9d9;
  }

  .klabel {
    margin-left: 5px;
    white-space: nowrap;
  }

  .vscroll {
    flex: none;
    display: flex;
    flex-direction: column;
    align-items: center;
    background: #f0f0f0;
    width: 16px;
  }

  .vscroll svg {
    width: 9px;
    height: 6px;
    flex: none;
  }

  .thumb {
    display: block;
    width: 100%;
    background: #c8c8c8;
    flex: none;
  }

  .sb1 {
    margin: 2px 1px 0 0;
    padding-top: 8px;
  }

  .sb1 .thumb {
    height: 410px;
    margin: 4px 0 43px;
  }

  .right {
    flex: 1;
    min-width: 0;
    display: flex;
    flex-direction: column;
    background: #f7f7f7;
  }

  .tb2 {
    height: 28px;
    padding-left: 10px;
    gap: 5px;
    background: linear-gradient(#fafafa, #f0f0f0);
  }

  .ren {
    margin-left: 3px;
  }

  .tool.cf {
    gap: 1px;
  }

  .ct {
    margin-left: 4px;
  }

  .fnd {
    margin-left: 4px;
  }

  .floorlbl {
    margin-left: -1px;
  }

  .combo {
    display: flex;
    align-items: center;
    width: 62px;
    height: 24px;
    background: #fff;
    padding-left: 2px;
    box-sizing: border-box;
  }

  .combo .caret {
    margin-left: auto;
    margin-right: 2px;
  }

  .updown {
    margin-right: 2px;
  }

  .panes {
    flex: 1;
    min-height: 0;
    display: flex;
    background: #f0f0f0;
  }

  .mid {
    width: 186px;
    flex: none;
    margin-left: 6px;
    display: flex;
    flex-direction: column;
  }

  .searchrow {
    display: flex;
    align-items: center;
    gap: 4px;
    height: 24px;
    margin-top: 6px;
    padding-left: 1px;
  }

  .searchbox {
    width: 157px;
    height: 23px;
    box-sizing: border-box;
    border: 1px solid #777;
    background: #fff;
    color: #888;
    padding: 3px 2px;
    line-height: 16px;
  }

  .midtree {
    flex: none;
    height: 562px;
    margin-top: 1px;
    display: flex;
    background: #fff;
    border: 1px solid #909090;
    box-sizing: border-box;
    overflow: hidden;
  }

  .midlist {
    flex: 1;
    min-width: 0;
    overflow: hidden;
  }

  .mroot {
    display: flex;
    align-items: center;
    height: 16px;
    padding-left: 7px;
  }

  .azlist {
    margin-left: 32px;
    border-left: 1px dotted #777;
  }

  .az {
    display: flex;
    align-items: center;
    height: 16px;
  }

  .az .ic {
    margin-left: -1px;
    width: 15px;
    height: 15px;
  }

  .azname {
    margin-left: 4px;
    padding: 0 2px 0 1px;
    line-height: 16px;
    position: relative;
  }

  .azname.on {
    background: #2a6fc4;
    color: #fff;
    box-shadow: -21px 0 0 0 #cde6fa;
  }

  .az:has(.on) .ic {
    position: relative;
    z-index: 1;
  }

  .sb2 {
    margin-right: 3px;
    padding-top: 6px;
  }

  .sb2 .thumb {
    height: 416px;
    margin-top: 3px;
  }

  .sb2 svg:last-child {
    margin-top: auto;
    margin-bottom: 6px;
  }

  .props {
    flex: none;
    width: 948px;
    margin-left: 4px;
    display: flex;
    flex-direction: column;
    height: 590px;
  }

  .tabline {
    height: 20px;
    margin-top: 1px;
    flex: none;
    border-bottom: 1px solid #c8c8c8;
    box-sizing: border-box;
    background: #f8f8f8;
  }

  .proptab {
    display: inline-block;
    height: 19px;
    padding: 1px 8px 0 4px;
    background: #fff;
    border: 1px solid #d8d8d8;
    border-bottom: none;
    box-sizing: border-box;
    margin-left: -1px;
    line-height: 17px;
  }

  .propbody {
    flex: 1;
    margin-top: 3px;
    background: #fff;
    border: 1px solid #bcbcbc;
    border-right: none;
    padding-top: 0;
  }

  .grid {
    border-collapse: collapse;
    table-layout: fixed;
    width: 370px;
    margin-left: 0;
  }

  .c0 {
    width: 22px;
  }

  .c1 {
    width: 191px;
  }

  .c2 {
    width: 126px;
  }

  .c3 {
    width: 31px;
  }

  .grid th {
    height: 22px;
    padding: 0;
    font-weight: 400;
    background: linear-gradient(#fbfbfb, #ececec);
    border: 1px solid #cfcfcf;
  }

  .grid th.hval {
    background: linear-gradient(#fbdfa6, #f2c069);
    color: #7a0a80;
  }

  .grid tbody tr {
    height: 19px;
  }

  .grid td {
    height: 18px;
    box-sizing: border-box;
    padding: 0;
    border: 1px solid #c4c4c4;
    line-height: 14px;
    white-space: nowrap;
    overflow: hidden;
  }

  .grid td.no {
    text-align: center;
    background: linear-gradient(#fafafa, #ebebeb);
  }

  .grid td.nosel {
    background: linear-gradient(#fde0ac, #f8cc80);
    color: #a02000;
  }

  .grid td.name {
    padding: 2px 0 0 19px;
  }

  .grid td.picked {
    background: #0078d7;
    color: #fff;
  }

  .blue {
    color: #0000ff;
  }

  .gray {
    color: #888;
  }

  .grid td.val {
    padding: 2px 0 0 2px;
  }

  .grid td.vpicked {
    background: #d6e8f7;
    font-weight: 700;
  }

  .rb {
    font: 11px/12px "Liberation Sans", sans-serif;
    color: #222;
    text-decoration: underline;
    margin: 0 1px;
  }

  .expbox {
    display: inline-block;
    width: 10px;
    height: 10px;
    border: 1px solid #aaa;
    margin: 0 4px 0 -16px;
    vertical-align: -1px;
    background:
      linear-gradient(#333, #333) center / 6px 1px no-repeat,
      linear-gradient(#333, #333) center / 1px 6px no-repeat;
  }

  .chk {
    text-align: center;
    line-height: 0 !important;
  }

  .box {
    display: inline-block;
    width: 11px;
    height: 11px;
    border: 1px solid #444;
    vertical-align: middle;
  }

  .sb3 {
    margin-top: 22px;
    width: 17px;
    height: 568px;
    padding-top: 5px;
    box-sizing: border-box;
    background: #f0f0f0;
  }

  .sb3 .thumb {
    height: 300px;
    margin-top: 3px;
  }

  .sb3 svg:last-child {
    margin-top: auto;
    margin-bottom: 6px;
  }

  /* status */
  .status {
    height: 19px;
    flex: none;
    display: flex;
    gap: 2px;
    background: #f0f0f0;
  }

  .cell {
    display: block;
    background: #f6f6f6;
    border: 1px solid #ddd;
    border-bottom: none;
    box-sizing: border-box;
    line-height: 18px;
    padding-left: 1px;
    white-space: nowrap;
  }

  .s0 {
    width: 148px;
  }

  .s1 {
    width: 78px;
  }

  .s2 {
    width: 98px;
  }

  .s3 {
    width: 48px;
  }

  .s4 {
    width: 914px;
  }

  .s5 {
    width: 68px;
  }

  /* taskbar */
  .taskbar {
    height: 41px;
    flex: none;
    display: flex;
    background: #0a1419;
    color: #fff;
  }

  .start {
    width: 48px;
    background: #000;
    display: flex;
    align-items: center;
    justify-content: center;
  }

  .start svg {
    width: 17px;
    height: 17px;
  }

  .tsearch {
    width: 344px;
    background: #333;
    display: flex;
    align-items: center;
    padding-left: 9px;
    box-sizing: border-box;
    font-size: 14px;
    color: #8d8d8d;
    position: relative;
  }

  .ring {
    width: 20px;
    height: 20px;
    box-sizing: border-box;
    border: 3px solid #e6e6e6;
    border-radius: 50%;
    margin-right: 7px;
  }

  .tmic {
    width: 14px;
    height: 18px;
    margin-left: auto;
    margin-right: 14px;
  }

  .ticons {
    display: flex;
    margin-left: -2px;
    height: 41px;
  }

  .tk {
    width: 49px;
    display: flex;
    align-items: center;
    justify-content: center;
    box-sizing: border-box;
  }

  .tk svg {
    width: 24px;
    height: 24px;
  }

  .m2 {
    margin-left: 2px;
  }

  .m3 {
    margin-left: 3px;
  }

  .m5 {
    margin-left: 5px;
  }

  .tk.ul {
    width: 41px;
    margin: 0 4px;
    border-bottom: 3px solid #76b9ed;
  }

  .tk.shield {
    width: 40px;
    margin: 0 4px;
    background: linear-gradient(90deg, #2a5a2f 50%, #1a2226 50%);
    border-bottom: 3px solid #4fd12f;
  }

  .tk.act {
    background: #2e3a42;
    border-bottom: 3px solid #76b9ed;
  }

  .tray {
    margin-left: auto;
    display: flex;
    align-items: center;
    padding-right: 16px;
    position: relative;
  }

  .tray svg {
    flex: none;
  }

  .t1 {
    width: 12px;
    height: 7px;
    margin-right: 12px;
  }

  .t2 {
    width: 16px;
    height: 14px;
    margin-right: 7px;
  }

  .t3 {
    width: 22px;
    height: 16px;
    margin-left: 3px;
    margin-right: 10px;
  }

  .zh {
    font-size: 14px;
    margin-right: 15px;
  }

  .sg {
    display: inline-flex;
    align-items: center;
    justify-content: center;
    width: 25px;
    height: 23px;
    border-radius: 4px;
    background: #f4511e;
    color: #fff;
    font: 700 24px/22px "Liberation Sans", sans-serif;
    transform: rotate(-6deg);
    flex: none;
    z-index: 1;
  }

  .sg.small {
    width: 14px;
    height: 15px;
    font-size: 14px;
    border-radius: 3px;
    margin-right: 16px;
  }

  .clock {
    display: flex;
    flex-direction: column;
    align-items: center;
    width: 62px;
    line-height: 18px;
    gap: 2px;
    color: #e8e8e8;
  }

  .noti {
    position: relative;
    margin-left: 27px;
    width: 16px;
    height: 16px;
  }

  .noti svg {
    width: 16px;
    height: 14px;
  }

  .noti b {
    position: absolute;
    left: -2px;
    top: 8px;
    width: 18px;
    height: 18px;
    border-radius: 50%;
    background: #444;
    border: 1px solid #999;
    box-sizing: border-box;
    font: 700 12px/16px "Liberation Sans", sans-serif;
    text-align: center;
  }

  /* section dialog */
  .dialog {
    position: absolute;
    left: 823px;
    top: 132px;
    width: 521px;
    height: 571px;
    box-sizing: border-box;
    border: 1px solid #555;
    background: linear-gradient(#bccbdb, #d6e3f0 30px, #dce6f1);
    padding: 0 7px;
    display: flex;
    flex-direction: column;
  }

  .dlgtitle {
    height: 30px;
    flex: none;
    padding-top: 11px;
    box-sizing: border-box;
    color: #a4a4a4;
  }

  .dlgtabs {
    display: flex;
    height: 21px;
    flex: none;
    background: #eeeeee;
    padding-left: 2px;
    align-items: flex-end;
    width: 503px;
  }

  .dtab {
    width: 47px;
    height: 19px;
    box-sizing: border-box;
    border: 1px solid #ccc;
    border-bottom: none;
    background: #ececec;
    text-align: left;
    padding-left: 5px;
    line-height: 18px;
  }

  .dtab.act {
    width: 50px;
    height: 21px;
    background: #fff;
    line-height: 19px;
    padding-left: 6px;
  }

  .dlgbody {
    flex: 1;
    min-height: 0;
    border: 1px solid #ccc;
    border-bottom: none;
    box-sizing: border-box;
    width: 502px;
    padding: 4px 1px 0 4px;
    display: flex;
    flex-direction: column;
    background: #f3f3f3;
  }

  .dtb {
    height: 24px;
    flex: none;
    display: flex;
    align-items: center;
    gap: 10px;
    background: linear-gradient(#fafafa, #eee);
    white-space: nowrap;
    padding: 0 4px 0 3px;
    box-sizing: border-box;
  }

  .dtb .more {
    margin-top: -10px;
  }

  .dtb .sep {
    margin: 0 -2px;
  }

  .dtb .grip {
    margin-right: -4px;
  }

  .grip {
    display: block;
    width: 2px;
    height: 14px;
    flex: none;
    background: repeating-linear-gradient(#aaa 0 2px, transparent 2px 4px);
    margin-right: 2px;
  }

  .dtb2 {
    height: 31px;
    flex: none;
    padding-top: 2px;
    box-sizing: border-box;
    background: #f0f0f0;
  }

  .dtb2in {
    display: inline-flex;
    align-items: center;
    height: 27px;
    padding-left: 3px;
    gap: 6px;
    background: linear-gradient(#fafafa, #eee);
  }

  .gray2 {
    color: #8a8a8a;
    margin-left: -2px;
    margin-right: -4px;
  }

  .select {
    display: flex;
    align-items: center;
    justify-content: flex-end;
    width: 133px;
    height: 23px;
    box-sizing: border-box;
    border: 1px solid #777;
    background: #f4f4f4;
    padding-right: 5px;
  }

  .select .caret {
    border-top-color: #666;
  }

  .canvas {
    flex: none;
    width: 496px;
    height: 424px;
    box-sizing: border-box;
    border: 2px solid #f00;
    background: #000;
  }

  .canvas svg {
    display: block;
    width: 492px;
    height: 420px;
  }

  .dimtxt text {
    font: 9px "Liberation Sans", sans-serif;
    fill: #dfe9f5;
    text-anchor: middle;
  }

  .origin {
    font: 11px "Liberation Sans", sans-serif;
    fill: #444;
    text-anchor: middle;
  }

  .note {
    font: 8.500px "Liberation Sans", "Noto Sans CJK SC", sans-serif;
  }

  .dstat {
    margin-top: 6px;
    margin-left: -5px;
    height: 20px;
    flex: none;
    display: flex;
    gap: 2px;
  }

  .dcell {
    display: block;
    background: #f2f2f2;
    border: 1px solid #dedede;
    box-sizing: border-box;
    line-height: 18px;
  }

  .dc1 {
    width: 148px;
    padding-left: 8px;
  }

  .dc2 {
    width: 355px;
    position: relative;
  }

  .rgrip {
    position: absolute;
    right: 1px;
    bottom: 1px;
    width: 10px;
    height: 10px;
    background: repeating-linear-gradient(135deg, transparent 0 3px, #aaa 3px 5px);
  }

  /* desktop widgets */
  .ball {
    position: absolute;
    left: 898px;
    top: 20px;
    width: 125px;
    height: 37px;
    border-radius: 18px;
    background: #f2f2f2;
    box-shadow: 0 1px 4px rgba(0, 0, 0, 0.4);
    display: flex;
    align-items: center;
  }

  .balltext {
    width: 44px;
    height: 44px;
    margin: 0 0 0 -1px;
    align-self: flex-start;
    transform: translateY(-6px);
    flex: none;
    border-radius: 50%;
    background: #45c95f;
    border: 2px solid #f4f4f4;
    box-shadow: 0 1px 4px rgba(0, 0, 0, 0.5);
    color: #fff;
    text-align: center;
    font: 14px/44px "Liberation Sans", sans-serif;
    box-sizing: content-box;
  }

  .speed {
    display: flex;
    flex-direction: column;
    gap: 1px;
    margin-left: 5px;
    width: 45px;
  }

  .sp {
    display: flex;
    align-items: center;
    justify-content: space-between;
    font: 10px/14px "Liberation Sans", sans-serif;
  }

  .sp svg {
    width: 8px;
    height: 10px;
  }

  .bplus {
    position: relative;
    width: 18px;
    height: 18px;
    margin-left: 6px;
    border-radius: 50%;
    background:
      linear-gradient(#fff, #fff) center / 10px 2px no-repeat,
      linear-gradient(#fff, #fff) center / 2px 10px no-repeat,
      #3a78d0;
  }

  .bplus i {
    position: absolute;
    right: -2px;
    top: -3px;
    width: 8px;
    height: 8px;
    border-radius: 50%;
    background: #e0282c;
  }

  .ime {
    position: absolute;
    left: 868px;
    top: 2px;
    display: flex;
    align-items: center;
  }

  .imebar {
    display: flex;
    align-items: center;
    gap: 4px;
    height: 23px;
    width: 187px;
    box-sizing: border-box;
    margin-left: -5px;
    padding-left: 15px;
    background: #fff;
    border: 1px solid #bcd6ee;
    color: #1a7fd0;
  }

  .imebar svg {
    width: 18px;
    height: 18px;
    flex: none;
  }

  .zhb {
    font-size: 14px;
    font-weight: 500;
    width: 14px;
    margin-right: 2px;
  }

  .punc {
    font: 700 14px/14px "Liberation Sans", sans-serif;
    width: 14px;
    margin-right: 2px;
  }

  .imebar svg:nth-of-type(4) {
    margin-left: 1px;
  }
</style>
